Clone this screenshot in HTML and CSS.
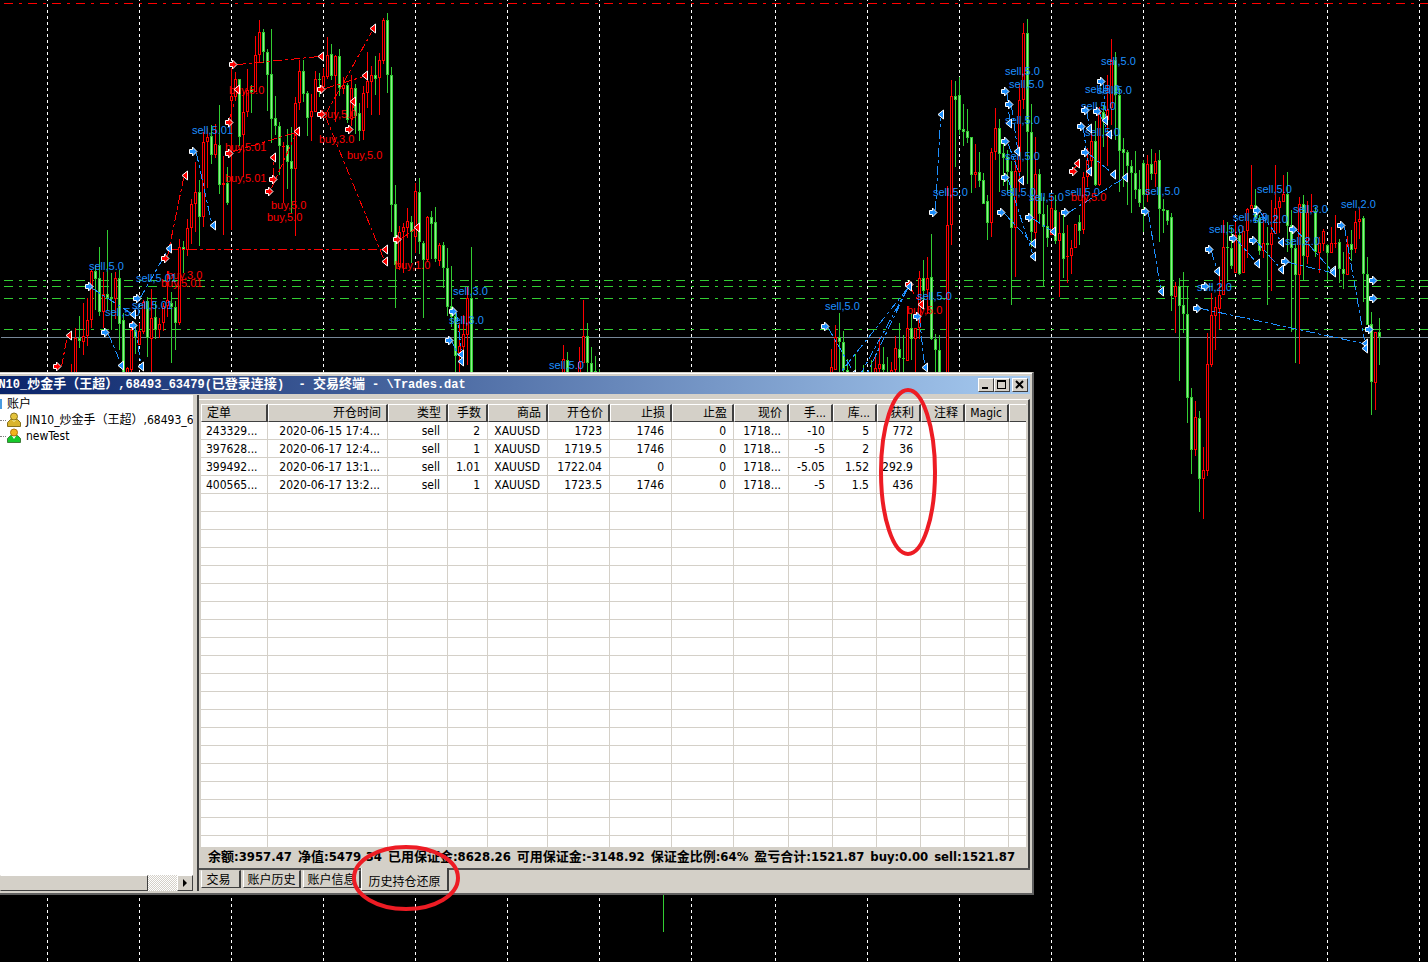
FILE: index.html
```html
<!DOCTYPE html>
<html lang="zh-CN">
<head>
<meta charset="utf-8">
<title>交易终端 - \Trades.dat</title>
<link rel="stylesheet" href="styles.css">
</head>
<body>
<main class="desktop">
  <svg class="chart" id="chart" width="1428" height="962" viewBox="0 0 1428 962" role="img" aria-label="XAUUSD"></svg>

  <section class="window">
    <header class="titlebar">
      <h1 class="title">JIN10_<span class="han">炒金手（王超）</span>,68493_63479(<span class="han">已登录连接</span>)&nbsp; - <span class="han">交易终端</span> - \Trades.dat</h1>
      <div class="controls">
        <button class="control" type="button" aria-label="最小化"><svg width="12" height="10"><path d="M2 8h6" stroke="#000" stroke-width="2"/></svg></button>
        <button class="control" type="button" aria-label="最大化"><svg width="12" height="10" shape-rendering="crispEdges"><path d="M1 0h9v9H1zM2 2v6h7V2z" fill="#000" fill-rule="evenodd"/></svg></button>
        <button class="control close" type="button" aria-label="关闭"><svg width="12" height="10"><path d="M2 1l7 7M9 1l-7 7" stroke="#000" stroke-width="2"/></svg></button>
      </div>
    </header>
    <div class="content">
      <aside class="accounts">
        <ul class="tree">
          <li class="root"><i class="folder"></i>账户</li>
          <li class="leaf"><i class="branch"></i><svg class="person" width="14" height="16" viewBox="0 0 14 16"><path d="M.5 14.5v-4l3-3h7l3 3v4z" fill="#d9b42e" stroke="#86701a"/><path d="M5 8l2 2 2-2" fill="#fff6a0"/><circle cx="7" cy="4.500" r="3.500" fill="#e4c33b" stroke="#8c741a"/></svg><span>JIN10_炒金手（王超）,68493_63479</span></li>
          <li class="leaf"><i class="branch"></i><svg class="person" width="14" height="16" viewBox="0 0 14 16"><path d="M.5 14.5v-4l3-3h7l3 3v4z" fill="#16c92c" stroke="#3f7f3a"/><path d="M5 8l2 3 2-3" fill="#fff"/><circle cx="7" cy="4.500" r="3.500" fill="#f2b41c" stroke="#b07510"/></svg><span>newTest</span></li>
        </ul>
        <div class="scrollbar"><div class="thumb"></div><div class="track"></div><button class="arrow" type="button" aria-label="向右滚动"><svg width="5" height="8"><path d="M0 0l4 4-4 4z"/></svg></button></div>
      </aside>
      <div class="terminal">
        <div class="sheet">
          <table class="orders" id="orders">
            <colgroup><col class="w67"><col class="w120"><col class="w60"><col class="w40"><col class="w60"><col class="w62"><col class="w62"><col class="w62"><col class="w55"><col class="w44"><col class="w44"><col class="w44"><col class="w44"><col class="w44"><col></colgroup>
            <thead><tr><th class="first">定单</th><th>开仓时间</th><th>类型</th><th>手数</th><th>商品</th><th>开仓价</th><th>止损</th><th>止盈</th><th>现价</th><th>手...</th><th>库...</th><th>获利</th><th>注释</th><th>Magic</th><th></th></tr></thead>
            <tbody>
              <tr><td class="first">243329...</td><td>2020-06-15 17:4...</td><td>sell</td><td>2</td><td>XAUUSD</td><td>1723</td><td>1746</td><td>0</td><td>1718...</td><td>-10</td><td>5</td><td>772</td><td></td><td></td><td></td></tr>
              <tr><td class="first">397628...</td><td>2020-06-17 12:4...</td><td>sell</td><td>1</td><td>XAUUSD</td><td>1719.5</td><td>1746</td><td>0</td><td>1718...</td><td>-5</td><td>2</td><td>36</td><td></td><td></td><td></td></tr>
              <tr><td class="first">399492...</td><td>2020-06-17 13:1...</td><td>sell</td><td>1.01</td><td>XAUUSD</td><td>1722.04</td><td>0</td><td>0</td><td>1718...</td><td>-5.05</td><td>1.52</td><td>292.9</td><td></td><td></td><td></td></tr>
              <tr><td class="first">400565...</td><td>2020-06-17 13:2...</td><td>sell</td><td>1</td><td>XAUUSD</td><td>1723.5</td><td>1746</td><td>0</td><td>1718...</td><td>-5</td><td>1.5</td><td>436</td><td></td><td></td><td></td></tr>
            </tbody>
          </table>
          <p class="summary"><span>余额:3957.47</span><span>净值:5479.34</span><span>已用保证金:8628.26</span><span>可用保证金:-3148.92</span><span>保证金比例:64%</span><span>盈亏合计:1521.87</span><span>buy:0.00</span><span>sell:1521.87</span></p>
        </div>
        <nav class="tabs">
          <button class="tab" type="button">交易</button><button class="tab wide" type="button">账户历史</button><button class="tab wide" type="button">账户信息</button><button class="tab active" type="button">历史持仓还原</button><span class="rest"></span>
        </nav>
      </div>
    </div>
  </section>

  <svg class="marks" width="1428" height="962" viewBox="0 0 1428 962" aria-hidden="true">
    <ellipse cx="908" cy="472" rx="27" ry="82"/>
    <ellipse cx="406" cy="878" rx="52" ry="31"/>
  </svg>
</main>
<script src="chart.js"></script>
</body>
</html>
```
FILE: styles.css
```css
* { box-sizing: border-box; }
body {
  margin: 0;
  background: #000;
  color: #000;
  font: 12px/16px "DejaVu Sans Condensed", "Noto Sans", "Noto Sans CJK SC", sans-serif;
}
button { font: inherit; color: inherit; padding: 0; margin: 0; border: 0; }
.desktop { position: relative; min-height: 100vh; overflow: hidden; }
.chart, .marks { position: absolute; top: 0; left: 0; }
.marks { pointer-events: none; }
.marks ellipse { fill: none; stroke: #ed1c24; stroke-width: 4px; }

.chart .white { stroke: #fff; stroke-dasharray: 3 3; }
.chart .level { stroke-dasharray: 9 6 3 6; }
.chart .red { stroke: #f00; }
.chart .green { stroke: #32cd32; }
.chart .bid { stroke: #778899; }
.chart .trade { stroke-dasharray: 9 3 3 3; }
.chart .trade.blue { stroke: #1e90ff; }
.chart .buy { fill: #f00; }
.chart .sell { fill: #1e90ff; }
.chart .marker { stroke: #fff; }
.chart .up { fill: #f00; }
.chart .down { fill: #32cd32; }
.chart .hollow { fill: #000; }
.chart .solid { fill: #90ee90; }
.chart text { font: 11px "Liberation Sans", Arial, sans-serif; }

.window {
  position: absolute;
  top: 372px;
  left: 0;
  right: 394px;
  padding: 2px 2px 2px 0;
  background: #d4d0c8;
  border-top: 1px solid #d4d0c8;
  border-right: 2px solid #606060;
  border-bottom: 2px solid #606060;
  box-shadow: inset 0 1px #fff;
}
.titlebar {
  display: flex;
  align-items: center;
  height: 18px;
  margin-top: 1px;
  padding-right: 2px;
  background: linear-gradient(90deg, #0a246a, #a6caf0);
}
.title {
  flex: 1;
  margin: 0 0 0 -16px;
  overflow: hidden;
  color: #fff;
  font: bold 12px/18px "Liberation Mono", "Noto Sans CJK SC", monospace;
  white-space: nowrap;
}
.title .han { font-size: 13px; }
.controls { display: flex; }
.control {
  display: flex;
  justify-content: center;
  align-items: center;
  width: 16px;
  height: 14px;
  background: #d4d0c8;
  border: 1px solid;
  border-color: #fff #404040 #404040 #fff;
}
.control.close { margin-left: 2px; }

.content { display: flex; margin-top: 1px; }
.accounts {
  display: flex;
  flex-direction: column;
  flex: none;
  width: 199px;
  padding-right: 2px;
  background: #fff;
  border-right: 2px solid #404040;
  box-shadow: inset -4px 0 #d4d0c8;
}
.tree { flex: 1; width: 193px; margin: 0; padding: 1px 0 0; list-style: none; overflow: hidden; }
.tree li { display: flex; align-items: center; height: 16px; white-space: nowrap; }
.folder { flex: none; width: 2px; height: 10px; margin-right: 5px; background: #4a9be0; }
.branch { flex: none; width: 6px; margin-right: 1px; border-top: 1px dotted #808080; }
.person { flex: none; margin-right: 5px; }
.scrollbar { display: flex; width: 193px; height: 16px; }
.thumb { width: 148px; background: #d4d0c8; border: 1px solid; border-color: #fff #404040 #404040 #d4d0c8; }
.track { flex: 1; background: repeating-conic-gradient(#fff 0 25%, #d4d0c8 0 50%) 0 0 / 2px 2px; }
.arrow { display: flex; align-items: center; justify-content: center; width: 16px; background: #d4d0c8; border: 1px solid; border-color: #fff #404040 #404040 #fff; }

.terminal { flex: 1; min-width: 0; padding-top: 4px; }
.sheet { padding: 4px 2px 0 2px; border-top: 1px solid #fff; border-right: 2px solid #404040; }
.orders { width: 100%; table-layout: fixed; border-collapse: separate; border-spacing: 0; background: #fff; }
.orders col.w40 { width: 40px; }
.orders col.w44 { width: 44px; }
.orders col.w55 { width: 55px; }
.orders col.w60 { width: 60px; }
.orders col.w62 { width: 62px; }
.orders col.w67 { width: 67px; }
.orders col.w120 { width: 120px; }
.orders th, .orders td {
  height: 18px;
  padding: 1px 7px 0 0;
  overflow: hidden;
  font-weight: normal;
  line-height: 16px;
  text-align: right;
  white-space: nowrap;
}
.orders th {
  background: #d4d0c8;
  border: 1px solid;
  border-color: #fff #404040 #404040 #fff;
  border-right-width: 2px;
  padding: 1px 5px 0 0;
  line-height: 15px;
}
.orders td { border-right: 1px solid #d4d0c8; border-bottom: 1px solid #d4d0c8; }
.orders .first { padding: 1px 0 0 5px; text-align: left; }
.orders th:last-child, .orders td:last-child { border-right: 0; }
.orders .cut td { height: 11px; border-bottom: 0; }
.summary {
  display: flex;
  gap: 6px;
  margin: 0;
  padding: 2px 0 3px 7px;
  font-size: 13px;
  font-weight: bold;
  white-space: nowrap;
}
.tabs { display: flex; align-items: flex-start; padding-left: 2px; height: 23px; box-shadow: inset 0 2px #505050; }
.tab {
  width: 40px;
  height: 18px;
  margin: 2px 2px 0 0;
  padding: 1px 4px 0 0;
  background: #d4d0c8;
  border: 1px solid;
  border-color: transparent #404040 #404040 #fff;
  border-right-width: 2px;
}
.tab.wide { width: 58px; padding-right: 0; }
.tab.wide + .wide { margin-right: 0; }
.tab.active { width: 88px; height: 23px; margin: 0; padding: 5px 0 0; border-top: 0; }
.rest { flex: 1; }
```
FILE: chart.js
```js
const chart = document.getElementById('chart');
const NS = 'http://www.w3.org/2000/svg';

function add(tag, attrs, text) {
  const node = document.createElementNS(NS, tag);
  for (const key in attrs) node.setAttribute(key, attrs[key]);
  if (text) node.textContent = text;
  chart.appendChild(node);
}
function line(x1, y1, x2, y2, cls) {
  add('line', { x1: x1 + .5, y1: y1 + .5, x2: x2 + .5, y2: y2 + .5, class: cls, 'shape-rendering': 'crispEdges' });
}
const rows = s => s.trim().split(/\s*;\s*|\n/).filter(Boolean).map(r => r.trim().split(/\s+/));

/* Day separators and order levels */
[47, 139, 231, 323, 415, 507, 599, 691, 775, 867, 959, 1051, 1143, 1235, 1327, 1419]
  .forEach(x => add('line', { x1: x + .5, y1: -2, x2: x + .5, y2: 962, class: 'white' }));
line(3, 3, 1428, 3, 'level red');
[280, 286, 298, 329].forEach(y => line(3, y, 1428, y, 'level green'));
line(0, 337, 1428, 337, 'bid');
line(663, 894, 663, 931, 'green');

/* Candles: x, colour, high, body top, body bottom, low */
const candles = `
71 r 364 364 364 373;75 r 328 338 373 373;79 g 316 338 341 348;83 r 303 336 342 355;87 r 298 320 336 346
91 r 270 271 320 328;95 g 265 271 279 310;99 g 247 278 312 316;103 r 272 294 312 328;107 g 230 294 298 310
111 g 273 297 299 330;115 r 272 278 299 319;119 g 270 278 324 350;123 g 313 320 373 373;127 r 367 368 373 373
131 r 322 330 370 373;135 g 325 330 337 354;139 r 323 331 345 345;143 r 300 302 332 334;147 g 297 301 338 357
151 r 289 318 339 372;155 g 302 317 330 339;159 r 318 324 330 338;163 r 303 306 323 331;167 r 271 300 306 317
171 g 292 303 307 363;175 g 301 307 323 350;179 r 239 247 323 325;183 g 241 247 250 273;187 r 219 228 250 256
191 r 199 204 228 244;195 r 162 192 204 232;199 g 180 192 217 246;203 r 132 142 217 227;207 r 128 137 142 188
211 g 125 136 155 164;215 r 124 144 155 158;219 g 105 145 185 194;223 r 156 183 185 235;227 g 167 183 203 205
231 r 68 96 101 230;235 r 72 79 97 99;239 g 79 79 137 146;243 r 92 112 135 177;247 r 69 90 112 117
251 g 85 89 92 113;255 r 36 55 92 92;259 r 20 32 55 63;263 g 29 32 52 63;267 g 49 52 75 111
271 g 29 74 119 143;275 g 96 118 126 135;279 g 122 126 146 175;283 r 142 146 147 203;287 g 129 145 162 189
291 g 127 161 169 213;295 r 97 103 169 236;299 r 60 71 103 110;303 g 60 71 94 102;307 g 91 93 118 136
311 r 94 111 117 141;315 r 71 79 112 112;319 g 73 79 80 97;323 r 68 76 87 90;327 r 37 55 77 79
331 g 44 54 76 80;335 r 55 56 76 122;339 g 49 56 88 96;343 r 77 85 89 94;347 g 83 85 120 123
351 r 75 88 119 126;355 g 84 88 116 134;359 g 103 113 131 141;363 r 86 93 131 140;367 r 52 81 93 108
371 r 66 75 82 115;375 g 56 75 79 95;379 r 53 60 78 115;383 r 18 20 61 64;387 g 13 20 75 93
391 g 67 75 205 232;395 g 185 204 265 308;399 r 226 232 267 270;403 r 223 227 232 273;407 r 208 221 228 238
411 g 216 222 232 263;415 r 183 191 237 253;419 g 178 192 242 254;423 g 241 243 260 318;427 r 216 217 260 262
431 g 211 217 224 259;435 g 207 222 259 262;439 r 243 245 261 266;443 g 242 245 268 288;447 g 248 268 307 316
451 g 266 306 317 327;455 g 313 316 356 373;459 r 323 346 353 373;463 r 315 334 347 353;467 r 287 298 335 365
471 g 247 298 373 373;563 r 345 359 373 373;567 g 352 360 373 373;579 r 347 362 373 373;583 r 300 336 363 363
587 g 323 336 363 373;591 g 347 363 373 373;595 g 356 371 373 373;599 g 369 369 369 373
831 r 349 367 373 373;835 r 325 337 370 370;839 g 313 337 342 373;843 g 331 342 370 373;847 g 359 370 373 373
855 g 354 354 354 373;863 g 365 365 365 373;871 g 360 360 360 373;875 r 356 368 373 373;879 r 338 364 369 373
883 g 347 364 370 373;887 g 357 357 357 373;891 r 362 370 373 373;895 r 336 348 370 373;899 g 323 349 358 373
903 g 335 358 359 373;907 r 306 328 361 361;911 g 313 328 339 360;915 r 328 328 339 373;919 r 271 278 328 339
923 g 260 278 291 305;927 r 257 278 290 314;931 g 234 277 339 340;935 g 334 339 350 373;939 g 335 350 373 373
947 r 186 225 373 373;951 r 80 96 225 245;955 g 81 96 100 167;959 g 77 95 130 135;963 g 104 129 132 146
967 g 109 131 138 143;971 g 137 137 175 193;975 r 144 172 175 188;979 g 152 172 181 187;983 g 173 180 204 204
987 g 195 201 223 240;991 r 148 152 223 237;995 r 108 128 152 160;999 g 119 128 154 192;1003 g 143 153 158 186
1007 g 150 157 172 193;1011 g 161 171 228 305;1015 r 160 171 228 277;1019 r 85 100 172 192;1023 r 23 33 100 109
1027 g 19 33 132 184;1031 g 104 132 232 247;1035 r 137 174 233 240;1039 g 169 174 214 224;1043 g 197 214 227 287
1047 g 205 226 238 247;1051 r 195 208 235 235;1055 g 195 210 241 244;1059 r 212 233 241 297;1063 g 213 233 259 278
1067 r 225 256 257 283;1071 r 240 248 256 274;1075 r 224 224 248 248;1079 g 215 222 231 245;1083 r 172 177 230 234
1087 r 148 160 177 187;1091 r 133 141 161 172;1095 g 121 141 185 186;1099 r 107 112 185 186;1103 g 106 112 120 147
1107 r 75 110 120 166;1111 r 39 60 108 125;1115 g 52 60 95 140;1119 g 88 95 151 192;1123 g 138 149 153 187
1127 g 150 152 166 205;1131 g 160 166 173 213;1135 g 151 173 190 199;1139 g 170 189 203 207;1143 g 160 163 195 232
1147 r 155 164 195 202;1151 g 149 164 174 180;1155 r 153 161 174 187;1159 g 150 160 209 242;1163 g 199 209 211 233
1167 g 210 210 221 225;1171 g 213 217 296 311;1175 r 282 286 297 333;1179 g 278 286 306 381;1183 g 272 305 314 333
1187 g 286 314 398 423;1191 g 388 397 450 474;1195 r 401 417 450 456;1199 g 411 418 479 512;1203 r 447 470 479 519
1207 r 333 364 471 476;1211 r 293 315 365 367;1215 r 297 307 316 350;1219 r 276 295 309 329;1223 r 220 247 295 295
1227 g 222 247 248 282;1231 g 227 248 266 269;1235 r 222 235 273 273;1239 g 229 235 274 275;1243 r 226 231 273 273
1247 r 208 209 231 258;1251 r 165 205 209 209;1255 g 189 205 219 223;1259 g 215 218 251 255;1263 r 213 243 251 258
1267 g 227 243 245 305;1271 r 200 233 245 291;1275 r 165 208 234 234;1279 r 197 201 208 233;1283 r 175 194 202 202
1287 g 172 194 226 252;1291 g 210 225 248 332;1295 g 244 248 275 363;1299 r 197 204 275 364;1303 g 195 204 256 280
1307 r 201 212 257 264;1311 r 194 211 212 212;1315 g 207 211 252 257;1319 r 237 243 253 273;1323 r 229 231 244 251
1327 g 244 245 253 282;1331 r 227 243 253 253;1335 r 215 243 244 248;1339 g 239 242 269 283;1343 g 252 269 274 289
1347 r 236 244 275 275;1351 g 230 244 250 261;1355 r 211 222 249 253;1359 r 208 219 222 239;1363 g 216 218 274 302
1367 g 257 274 325 325;1371 g 312 324 382 415;1375 r 332 332 383 410;1379 g 318 332 337 365`;
rows(candles).forEach(([x, c, high, top, bottom, low]) => {
  const cls = c === 'r' ? 'up' : 'down';
  add('rect', { x: +x, y: high, width: 1, height: Math.max(1, low - high), class: cls });
  if (bottom - top < 1) return;
  add('rect', { x: x - 1, y: top, width: 3, height: bottom - top, class: cls });
  if (bottom - top > 2) add('rect', { x: +x, y: +top + 1, width: 1, height: bottom - top - 2, class: c === 'r' ? 'hollow' : 'solid' });
});

/* Links between entry and exit of a deal */
const buys = `61 366 67 335;167 256 183 178;237 64 319 56;229 118 237 92;233 151 295 132;273 176 273 160;271 188 295 134
325 114 371 32;325 88 363 76;325 116 383 258;351 125 353 105;401 238 415 228;169 249 383 249;909 286 919 302;1073 168 1077 165`;
const sells = `92 288 131 313;108 334 120 362;140 297 167 250;135 328 140 362;196 153 211 222;456 313 461 350;452 342 459 358
828 328 851 368;907 288 840 372;907 288 861 372;907 288 867 372;919 318 924 364;935 210 940 118;1007 94 1009 120;1011 106 1017 148
1008 144 1020 177;1008 180 1032 253;1004 213 1031 242;1032 218 1051 230;1068 212 1123 178;1103 84 1105 117;1087 112 1088 125
1099 113 1108 132;1083 128 1088 168;1088 153 1111 172;1148 213 1160 288;1211 251 1216 268;1200 308 1363 343;1236 239 1255 261
1260 212 1280 240;1256 241 1279 267;1296 230 1331 270;1288 262 1331 272;1344 227 1364 340`;
rows(buys).forEach(r => line(...r.map(Number), 'trade red'));
rows(sells).forEach(r => line(...r.map(Number), 'trade blue'));

/* Price labels */
const labels = `
89 270 sell,5.0;167 279 buy,3.0;136 282 sell,5.01;161 287 buy,5.01;132 309 sell,5.01;105 316 sell,5.0;192 134 sell,5.01
229 94 buy,5.0;225 151 buy,5.01;225 182 buy,5.01;271 209 buy,5.0;267 221 buy,5.0;321 118 buy,5.0;319 143 buy,3.0
347 159 buy,5.0;395 269 buy,1.0;453 295 sell,3.0;449 324 sell,3.0;549 369 sell,5.0;825 310 sell,5.0;917 300 sell,5.0
907 314 buy,5.0;933 196 sell,5.0;1005 75 sell,5.0;1009 88 sell,5.0;1005 124 sell,5.0;1005 160 sell,5.0;1001 196 sell,5.0
1029 201 sell,5.0;1101 65 sell,5.0;1085 93 sell,5.0;1097 94 sell,5.0;1081 110 sell,5.0;1085 136 sell,5.0;1065 196 sell,5.0
1071 201 buy,5.0;1145 195 sell,5.0;1209 233 sell,5.0;1233 221 sell,2.0;1253 223 sell,2.0;1257 193 sell,5.0;1293 213 sell,3.0
1285 245 sell,2.0;1341 208 sell,2.0;1197 291 sell,2.0`;
rows(labels).forEach(([x, y, t]) => add('text', { x, y, class: t.startsWith('buy') ? 'buy' : 'sell' }, t));

/* Entry arrows and exit triangles */
const arrow = (x, y) => `M${x - 3.5} ${y - 1.5}h3v-2.500l4.500 4.500l-4.500 4.500v-2.500h-3z`;
const exit = (x, y) => `M${x - 3} ${y + .5}l5.500-4.500v9z`;
const mark = (s, shape, cls) => rows(s).forEach(([x, y]) => add('path', { d: shape(+x, +y), class: 'marker ' + cls }));
mark(`57 366;165 258;233 64;229 122;229 153;273 179;269 191;321 89;321 114;349 129;397 239;909 284;1073 171`, arrow, 'buy');
mark(`69 335;185 175;321 56;237 89;373 28;365 75;353 101;297 131;273 157;385 249;385 261;417 227;921 304;1077 163`, exit, 'buy');
mark(`89 286;105 332;137 298;133 325;193 151;453 311;449 340;825 326;917 316;933 212;1005 91;1009 104;1005 141;1005 177
1001 212;1029 217;1065 212;1101 81;1085 110;1097 111;1081 126;1085 152;1145 211;1209 249;1205 286;1197 308;1233 238
1257 210;1253 240;1293 229;1285 261;1341 225;1373 280;1373 298;1369 329`, arrow, 'sell');
mark(`169 248;213 225;133 314;121 365;141 366;461 354;461 361;909 286;925 367;941 114;1009 123;1017 151;1021 180;1053 231
1033 243;1033 256;853 374;1105 120;1109 134;1089 128;1089 171;1113 174;1125 177;1161 291;1217 271;1257 263;1281 242
1281 269;1333 270;1333 272;1365 343;1365 348`, exit, 'sell');

/* Blank rows below the open orders */
const body = document.querySelector('#orders tbody');
for (let i = 0; i < 20; i++) {
  const row = body.insertRow();
  for (let c = 0; c < 15; c++) row.insertCell();
  if (i === 19) row.className = 'cut';
}
```
